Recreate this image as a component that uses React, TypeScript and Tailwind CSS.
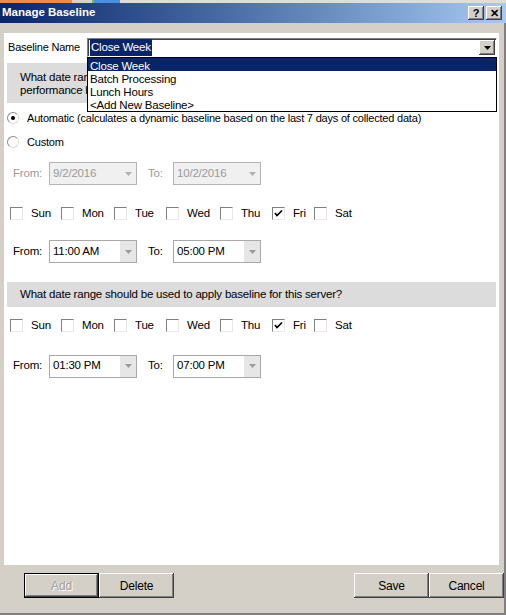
import React from 'react';

const font = { fontFamily: '"Liberation Sans", Arial, sans-serif' };

function Arrow({ color = '#000' }: { color?: string }) {
  return (
    <svg width="7" height="4" viewBox="0 0 7 4">
      <path d="M0 0h7L3.5 4z" fill={color} />
    </svg>
  );
}

function Combo({ value, disabled }: { value: string; disabled?: boolean }) {
  return (
    <div
      className={`flex h-[23px] w-[88px] shrink-0 items-stretch border ${
        disabled ? 'border-[#b4b4b4] bg-[#f0f0f0] text-[#9a9a9a]' : 'border-[#a9a9a9] bg-white text-black'
      }`}
    >
      <div className="flex flex-1 items-center pl-[3px]">{value}</div>
      <div className={`flex w-[16px] items-center justify-center ${disabled ? 'bg-[#f0f0f0]' : 'bg-[#e6e6e6]'}`}>
        <Arrow color={disabled ? '#b0b0b0' : '#9a9a9a'} />
      </div>
    </div>
  );
}

function RangeRow({ from, to, disabled }: { from: string; to: string; disabled?: boolean }) {
  return (
    <div className={`flex items-center text-[11.5px] ${disabled ? 'text-[#9a9a9a]' : ''}`}>
      <div className="w-[45px] shrink-0 pl-[9px]">From:</div>
      <Combo value={from} disabled={disabled} />
      <div className="w-[36px] shrink-0 pl-[11px]">To:</div>
      <Combo value={to} disabled={disabled} />
    </div>
  );
}

function Check({ checked }: { checked?: boolean }) {
  return (
    <div className="flex h-[13px] w-[13px] shrink-0 items-center justify-center border border-t-[#808080] border-l-[#808080] border-r-[#e8e8e8] border-b-[#e8e8e8] bg-white">
      {checked && (
        <svg width="9" height="9" viewBox="0 0 9 9">
          <path d="M1 4l2 2.5L8 1.5" stroke="#000" strokeWidth="1.7" fill="none" />
        </svg>
      )}
    </div>
  );
}

const days = [
  { d: 'Sun', w: 'w-[51px]' },
  { d: 'Mon', w: 'w-[53px]' },
  { d: 'Tue', w: 'w-[52px]' },
  { d: 'Wed', w: 'w-[54px]' },
  { d: 'Thu', w: 'w-[52px]' },
  { d: 'Fri', w: 'w-[42px]', c: true },
  { d: 'Sat', w: 'w-[51px]' },
];

function Days() {
  return (
    <div className="flex items-center pl-[6px] text-[11.5px]">
      {days.map((x) => (
        <div key={x.d} className={`flex shrink-0 items-center gap-[8px] ${x.w}`}>
          <Check checked={x.c} />
          <span>{x.d}</span>
        </div>
      ))}
    </div>
  );
}

function Radio({ on }: { on?: boolean }) {
  return (
    <div className="flex h-[12px] w-[12px] shrink-0 items-center justify-center rounded-full border border-[#8c8c8c] border-r-[#dcdcdc] border-b-[#dcdcdc] bg-white">
      {on && <div className="h-[4px] w-[4px] rounded-full bg-black" />}
    </div>
  );
}

function Btn({ label, disabled, def }: { label: string; disabled?: boolean; def?: boolean }) {
  return (
    <div
      className={`flex h-[25px] w-[75px] items-center justify-center bg-[#d4d0c8] text-[12px] ${
        def ? 'border border-black' : ''
      } shadow-[inset_-1px_-1px_#404040,inset_1px_1px_#fff,inset_-2px_-2px_#808080] ${
        disabled ? 'text-[#a0a0a0] [text-shadow:1px_1px_#fff]' : 'text-black'
      }`}
    >
      {label}
    </div>
  );
}

export default function App() {
  return (
    <div className="flex h-[615px] w-[506px] flex-col bg-[#d4d0c8] text-[11px] tracking-[-0.2px] text-black" style={font}>
      <div className="flex h-[3px]">
        <div className="w-[72px] bg-[#ee8a44]" />
        <div className="w-[20px] bg-[#d8d4cc]" />
        <div className="w-[2px] bg-[#6cc04a]" />
        <div className="w-[26px] bg-[#4a90e0]" />
        <div className="flex-1 bg-[#e0ddd6]" />
      </div>
      <div className="flex h-[20px] items-center justify-between bg-gradient-to-r from-[#0a246a] to-[#a6caf0] pl-[2px] pr-[4px]">
        <span className="text-[11.5px] font-bold tracking-normal text-white">Manage Baseline</span>
        <div className="flex gap-[2px]">
          {['?', '✕'].map((t) => (
            <div
              key={t}
              className="flex h-[14px] w-[16px] items-center justify-center bg-[#d4d0c8] text-[11px] font-bold leading-none shadow-[inset_-1px_-1px_#404040,inset_1px_1px_#fff,inset_-2px_-2px_#808080]"
            >
              {t}
            </div>
          ))}
        </div>
      </div>
      <div className="flex flex-1 flex-col border-r-2 border-b-2 border-r-[#808080] border-b-[#808080]">
        <div className="ml-[4px] mr-[5px] mt-[10px] flex h-[532px] flex-col bg-white">
          <div className="relative mt-[5px] flex items-center">
            <div className="w-[83px] shrink-0 pl-[4px] text-[11px]">Baseline Name</div>
            <div className="flex h-[19px] w-[410px] items-center border border-t-[#808080] border-l-[#808080] border-r-white border-b-white shadow-[inset_1px_1px_#404040]">
              <div className="flex flex-1 items-center pl-[2px]">
                <span className="bg-[#0a246a] px-[1px] text-[11.5px] text-white">Close Week</span>
              </div>
              <div className="mr-[1px] flex h-[15px] w-[16px] items-center justify-center bg-[#d4d0c8] shadow-[inset_-1px_-1px_#404040,inset_1px_1px_#fff,inset_-2px_-2px_#808080]">
                <Arrow />
              </div>
            </div>
            <div className="absolute left-[83px] top-[19px] z-10 w-[410px] border border-black bg-white text-[11.5px]">
              <div className="h-[13px] bg-[#0a246a] pl-[2px] leading-[16px] text-white">Close Week</div>
              <div className="h-[13px] pl-[2px] leading-[16px]">Batch Processing</div>
              <div className="h-[13px] pl-[2px] leading-[16px]">Lunch Hours</div>
              <div className="h-[14px] pl-[2px] leading-[16px]">&lt;Add New Baseline&gt;</div>
            </div>
          </div>
          <div className="mx-[3px] mt-[6px] flex h-[40px] flex-col justify-center bg-[#dcdcdc] pl-[13px] pt-[2px] text-[11.5px] leading-[13px]">
            <div>What date range should be used to calculate the</div>
            <div>performance baseline for this server?</div>
          </div>
          <div className="mt-[7px] flex items-center gap-[8px] pl-[3px] text-[11px]">
            <Radio on />
            <span>Automatic (calculates a dynamic baseline based on the last 7 days of collected data)</span>
          </div>
          <div className="mt-[7px] flex items-center gap-[8px] pl-[3px] text-[11px]">
            <Radio />
            <span>Custom</span>
          </div>
          <div className="mt-[12px]">
            <RangeRow from="9/2/2016" to="10/2/2016" disabled />
          </div>
          <div className="mt-[20px]">
            <Days />
          </div>
          <div className="mt-[18px]">
            <RangeRow from="11:00 AM" to="05:00 PM" />
          </div>
          <div className="mx-[3px] mt-[19px] flex h-[25px] items-center bg-[#dcdcdc] pl-[13px] text-[11.5px]">
            What date range should be used to apply baseline for this server?
          </div>
          <div className="mt-[10px]">
            <Days />
          </div>
          <div className="mt-[20px]">
            <RangeRow from="01:30 PM" to="07:00 PM" />
          </div>
        </div>
        <div className="mt-[8px] flex items-center justify-between pl-[24px] pr-[0px]">
          <div className="flex">
            <Btn label="Add" disabled def />
            <Btn label="Delete" />
          </div>
          <div className="flex">
            <Btn label="Save" />
            <Btn label="Cancel" />
          </div>
        </div>
      </div>
    </div>
  );
}
